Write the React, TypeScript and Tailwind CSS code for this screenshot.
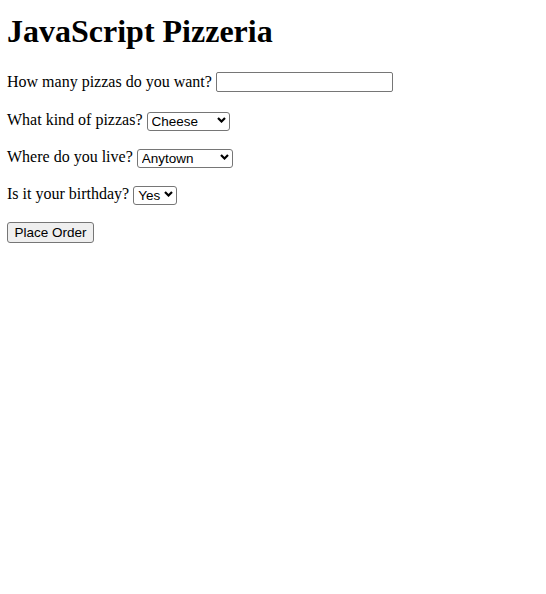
import React from "react";

function Chevron() {
  return (
    <svg
      className="pointer-events-none absolute right-[4px] top-1/2 -translate-y-1/2"
      width="9"
      height="6"
      viewBox="0 0 9 6"
    >
      <path d="M1 1 L4.5 4.5 L8 1" fill="none" stroke="#000" strokeWidth="2.2" />
    </svg>
  );
}

function Select({ w, options }: { w: string; options: string[] }) {
  return (
    <span className={`relative inline-block h-[19px] ${w}`}>
      <select
        className="h-full w-full appearance-none rounded-[3px] border border-[#767676] bg-white pl-[4px] font-['Liberation_Sans',Arial,sans-serif] text-[13.5px] leading-[17px] text-black"
        defaultValue={options[0]}
      >
        {options.map((o) => (
          <option key={o} value={o}>
            {o}
          </option>
        ))}
      </select>
      <Chevron />
    </span>
  );
}

export default function App() {
  return (
    <div className="min-h-[594px] w-full bg-white px-[7px] pt-[13px] font-['Liberation_Serif','Times_New_Roman',serif] text-[16px] text-black">
      <h1 className="text-[32px] font-bold leading-[37px]">JavaScript Pizzeria</h1>

      <div className="mt-[22px] flex h-[20px] items-center gap-[4px] leading-[20px]">
        <span>How many pizzas do you want?</span>
        <input
          type="text"
          className="h-[20px] w-[177px] rounded-[2px] border border-[#767676] bg-white px-[2px] font-['Liberation_Sans',Arial,sans-serif] text-[13.33px]"
        />
      </div>

      <div className="mt-[18px] flex h-[20px] items-center gap-[4px] leading-[20px]">
        <span>What kind of pizzas?</span>
        <Select w="w-[83px]" options={["Cheese", "Pepperoni", "Veggie"]} />
      </div>

      <div className="mt-[17px] flex h-[20px] items-center gap-[4px] leading-[20px]">
        <span>Where do you live?</span>
        <Select w="w-[96px]" options={["Anytown", "Smallville", "Bigcity"]} />
      </div>

      <div className="mt-[17px] flex h-[20px] items-center gap-[4px] leading-[20px]">
        <span>Is it your birthday?</span>
        <Select w="w-[44px]" options={["Yes", "No"]} />
      </div>

      <div className="mt-[18px] flex h-[21px] items-center">
        <button
          type="button"
          className="h-[21px] w-[87px] rounded-[3px] border border-[#767676] bg-[#efefef] font-['Liberation_Sans',Arial,sans-serif] text-[13.5px] leading-[17px] text-black"
        >
          Place Order
        </button>
      </div>
    </div>
  );
}
